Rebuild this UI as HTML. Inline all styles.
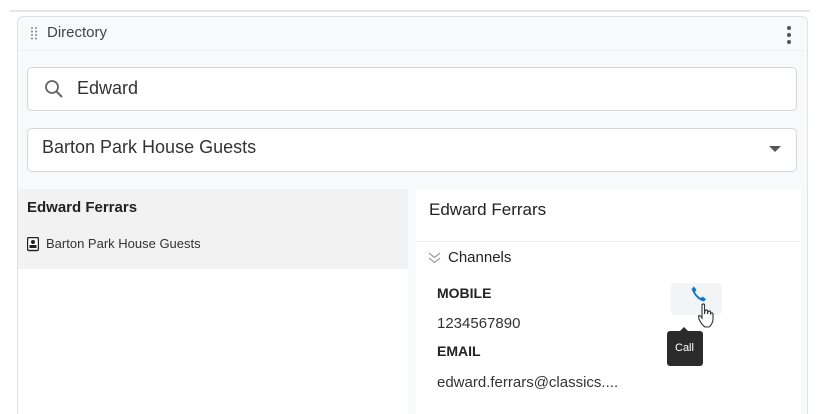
<!DOCTYPE html>
<html style="height:414px;overflow:hidden"><head><style>
body{margin:0;width:823px;height:414px;background:#fff;font-family:"Liberation Sans",sans-serif;color:#222;position:relative;overflow:hidden}
.a{position:absolute}
</style></head><body>
<div class="a" style="left:10px;top:10px;width:800px;height:2px;background:#e6e6e6"></div>
<div class="a" style="left:17px;top:16px;width:789px;height:400px;background:#f8f9fa;border:1px solid #dfe1e4;border-bottom:none;border-radius:6px 6px 0 0"></div>
<div class="a" style="left:18px;top:50px;width:787px;height:1px;background:#eef0f2"></div>
<svg class="a" style="left:30px;top:26px" width="8" height="14"><g fill="#888"><circle cx="2" cy="2" r="1"/><circle cx="6" cy="2" r="1"/><circle cx="2" cy="5.5" r="1"/><circle cx="6" cy="5.5" r="1"/><circle cx="2" cy="9" r="1"/><circle cx="6" cy="9" r="1"/><circle cx="2" cy="12.5" r="1"/><circle cx="6" cy="12.5" r="1"/></g></svg>
<div class="a" style="left:47px;top:24px;font-size:15px;color:#444">Directory</div>
<svg class="a" style="left:786px;top:25px" width="6" height="20"><g fill="#555"><circle cx="3" cy="3" r="2"/><circle cx="3" cy="10" r="2"/><circle cx="3" cy="17" r="2"/></g></svg>
<div class="a" style="left:27px;top:67px;width:768px;height:42px;background:#fff;border:1px solid #d4d6d9;border-radius:5px"></div>
<svg class="a" style="left:44px;top:79px" width="20" height="20"><circle cx="8" cy="8" r="6" fill="none" stroke="#666" stroke-width="1.8"/><path d="M12.5 12.5L18 18" stroke="#666" stroke-width="2"/></svg>
<div class="a" style="left:77px;top:78px;font-size:18px;color:#333">Edward</div>
<div class="a" style="left:27px;top:128px;width:768px;height:42px;background:#fff;border:1px solid #d4d6d9;border-radius:5px"></div>
<div class="a" style="left:42px;top:137px;font-size:18px;color:#333">Barton Park House Guests</div>
<svg class="a" style="left:769px;top:146px" width="12" height="7"><path d="M0 0H12L6 6z" fill="#555"/></svg>
<div class="a" style="left:18px;top:189px;width:390px;height:225px;background:#fff"></div>
<div class="a" style="left:18px;top:189px;width:390px;height:80px;background:#f2f2f2"></div>
<div class="a" style="left:27px;top:199px;font-size:15px;font-weight:bold;color:#222">Edward Ferrars</div>
<svg class="a" style="left:27px;top:237px" width="12" height="15"><rect x="0.5" y="0.5" width="11" height="13" rx="1.5" fill="#fff" stroke="#222" stroke-width="1.4"/><circle cx="6" cy="5" r="2" fill="#222"/><rect x="2.5" y="8" width="7" height="3" fill="#222"/></svg>
<div class="a" style="left:46px;top:236px;font-size:13px;color:#333">Barton Park House Guests</div>
<div class="a" style="left:416px;top:189px;width:385px;height:225px;background:#fff"></div>
<div class="a" style="left:416px;top:241px;width:385px;height:1px;background:#eceef0"></div>
<div class="a" style="left:429px;top:200px;font-size:17px;color:#222">Edward Ferrars</div>
<svg class="a" style="left:428px;top:252px" width="13" height="12"><path d="M1 1L6.5 5.5L12 1M1 6L6.5 10.5L12 6" fill="none" stroke="#888" stroke-width="1"/></svg>
<div class="a" style="left:448px;top:249px;font-size:15px;color:#222">Channels</div>
<div class="a" style="left:437px;top:285px;font-size:14px;font-weight:bold;color:#222">MOBILE</div>
<div class="a" style="left:437px;top:315px;font-size:15px;color:#333">1234567890</div>
<div class="a" style="left:437px;top:343px;font-size:14px;font-weight:bold;color:#222">EMAIL</div>
<div class="a" style="left:437px;top:374px;font-size:15px;color:#333">edward.ferrars@classics....</div>
<div class="a" style="left:671px;top:283px;width:51px;height:32px;background:#f3f4f6;border-radius:4px"></div>
<svg class="a" style="left:690px;top:285px" width="18" height="18"><path d="M4 1.5L6.5 5L5 7Q7 11 11 13L12.5 11.5L16 14L14 16.5Q6 15 1.5 4Z" fill="#1676c2"/></svg>
<svg class="a" style="left:697px;top:303px" width="20" height="26"><path d="M5 1.5Q6.5 0.5 7.5 1.5V11L8 7.5Q9.5 6.5 10.5 7.5V11L11 8.5Q12.5 7.5 13.5 8.5V11.5L14 10Q15.5 9.5 16 11V17Q15 22 12 24H8Q4 21 2 16L1.5 13Q2.5 12 4 13.5L5 15Z" fill="#fff" stroke="#333" stroke-width="1.1"/></svg>
<div class="a" style="left:667px;top:331px;width:36px;height:35px;background:#2b2b2b;border-radius:3px"></div>
<div class="a" style="left:680px;top:327px;width:0;height:0;border-left:4px solid transparent;border-right:4px solid transparent;border-bottom:4px solid #2b2b2b"></div>
<div class="a" style="left:675px;top:342px;font-size:11px;color:#fff">Call</div>
</body></html>
